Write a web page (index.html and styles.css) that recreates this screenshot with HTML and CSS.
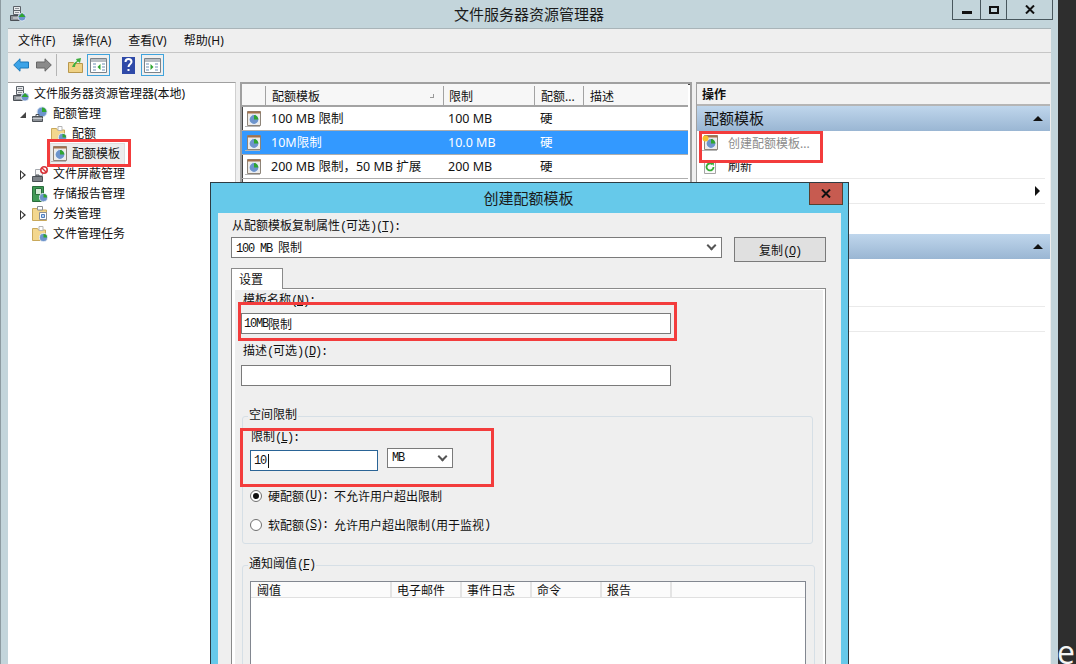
FILE: index.html
```html
<!DOCTYPE html>
<html lang="zh-CN">
<head>
    <meta charset="UTF-8">
    <title>文件服务器资源管理器</title>
    <link rel="stylesheet" href="styles.css">
</head>
<body>
    <svg class="icon-defs" width="0" height="0">
        <defs>
            <symbol id="pie" viewBox="0 0 10 10">
                <circle cx="5" cy="5" r="4.5" fill="#6d94cc" stroke="#e8eef6"/>
                <path d="M5 5V1a4 4 0 0 1 4 4z" fill="#2fa52f"/>
            </symbol>
            <symbol id="server" viewBox="0 0 16 16">
                <path d="M3.500 .5h7v4h-7zM3.500 4.500h7v4h-7z" fill="#e8eaec" stroke="#5b6168"/>
                <path d="M5 2.500h4M5 6.500h4" stroke="#8d9298"/>
                <path d="M.5 9.500h10v5H.5z" fill="#8d9298" stroke="#4b5056"/>
                <path d="M3 12h5" stroke="#e4e6e8"/>
                <circle cx="12" cy="11" r="4" fill="#6d94cc" stroke="#fff" stroke-width=".6"/>
                <path d="M8.500 11l3.500-4 3.500 4z" fill="#2fa52f"/>
            </symbol>
            <symbol id="quota-root" viewBox="0 0 16 16">
                <circle cx="10" cy="6" r="5" fill="#6d94cc" stroke="#dbe5f2"/>
                <path d="M10 6V1.500a4.500 4.500 0 0 1 4.500 4.500z" fill="#2fa52f"/>
                <path d="M.5 10.500h10v5H.5z" fill="#8d9298" stroke="#4b5056"/>
                <path d="M4 10.500V8.500h3v2" fill="none" stroke="#4b5056"/>
                <path d="M.5 12.500h10" stroke="#c8ccd0"/>
            </symbol>
            <symbol id="folder-pie" viewBox="0 0 16 16">
                <path d="M.5 2.500h5l1 1.500h7v10.500H.5z" fill="#f3d78e" stroke="#c9a95c"/>
                <path d="M7 .5h4v4H7z" fill="#fff" stroke="#b5b5b5"/>
                <use href="#pie" x="7" y="7" width="9" height="9"/>
            </symbol>
            <symbol id="template" viewBox="0 0 16 16">
                <path d="M2.500 .5h13v14h-13z" fill="#f0ece6" stroke="#8d8479"/>
                <path d="M2.500 .5h13v2h-13z" fill="#a3714c"/>
                <path d="M0 15.500h15" stroke="#b5b5b5"/>
                <use href="#pie" x="3.500" y="3" width="11" height="11"/>
            </symbol>
            <symbol id="screen" viewBox="0 0 16 16">
                <path d="M3.500 3.500h7v6h-7z" fill="#f8f8f8" stroke="#a5a9ae"/>
                <path d="M.5 10.500h10v5H.5z" fill="#7d8288" stroke="#4b5056"/>
                <path d="M4 10.500V9h3v1.500" fill="none" stroke="#4b5056"/>
                <circle cx="12" cy="4" r="3.200" fill="#fff" stroke="#d8343a" stroke-width="1.600"/>
                <path d="M10 2l4 4" stroke="#d8343a" stroke-width="1.400"/>
            </symbol>
            <symbol id="report" viewBox="0 0 16 16">
                <path d="M.5 .5h11v15H.5z" fill="#3f9a55" stroke="#2a6c3c"/>
                <path d="M3.500 2.500h6v6h-6z" fill="#d4ecd6" stroke="#2a6c3c"/>
                <use href="#pie" x="7" y="7" width="9" height="9"/>
            </symbol>
            <symbol id="folder-class" viewBox="0 0 16 16">
                <path d="M.5 2.500h5l1 1.500h8v10.500H.5z" fill="#f3d78e" stroke="#c9a95c"/>
                <path d="M5.500 .5h5v3.500h-5zM7.500 6.500h7v7h-7z" fill="#fff" stroke="#8a8f96"/>
                <path d="M9.500 8.500h3v3h-3z" fill="#bcd3ee" stroke="#4f7fc0"/>
            </symbol>
        </defs>
    </svg>

    <div class="window">
        <div class="titlebar">
            <svg class="app-icon" width="16" height="16"><use href="#server"/></svg>
            <div class="title">文件服务器资源管理器</div>
            <div class="win-buttons">
                <div class="win-btn btn-min"><span class="glyph-min"></span></div>
                <div class="win-btn btn-max"><span class="glyph-max"></span></div>
                <div class="win-btn btn-close">
                    <svg width="10" height="9" viewBox="0 0 10 9"><path d="M1 .5l8 8M9 .5l-8 8" stroke="#111" stroke-width="2"/></svg>
                </div>
            </div>
        </div>

        <div class="client">
            <div class="menubar">
                <span class="menu-item">文件(F)</span>
                <span class="menu-item">操作(A)</span>
                <span class="menu-item">查看(V)</span>
                <span class="menu-item">帮助(H)</span>
            </div>

            <div class="toolbar">
                <svg class="tool tool-back" width="16" height="14" viewBox="0 0 16 14"><path d="M.7 7L7 .8V4h8.500v6H7v3.200z" fill="#3ba3e8" stroke="#1d78b8"/></svg>
                <svg class="tool tool-forward" width="16" height="14" viewBox="0 0 16 14"><path d="M15.300 7L9 .8V4H.5v6H9v3.200z" fill="#8a8a8a" stroke="#666"/></svg>
                <span class="tool-sep"></span>
                <svg class="tool tool-up" width="15" height="16" viewBox="0 0 15 16">
                    <path d="M.5 5.500h5l1 1h8v9H.5z" fill="#efd184" stroke="#b8974c"/>
                    <path d="M4 10c1-3 3-5 5-6L8 2l5-1-1 5-2-1.500C9 5.500 7 7 7 10z" fill="#3fae3f"/>
                </svg>
                <span class="tool-box">
                    <svg width="17" height="15" viewBox="0 0 17 15">
                        <path d="M.5 .5h16v14H.5z" fill="#fff" stroke="#7b8289"/>
                        <path d="M1 1h15v3H1z" fill="#b8bec4"/>
                        <path d="M3 6h3M3 9h3M3 12h3M12 6h3M12 9h3M12 12h3" stroke="#6d8fb5"/>
                        <path d="M10.500 6v6l-3-3z" fill="#2fa52f"/>
                    </svg>
                </span>
                <svg class="tool tool-help" width="13" height="17" viewBox="0 0 13 17">
                    <path d="M0 0h13v17H0z" fill="#2f4aa8"/>
                    <path d="M3.500 5c0-4 6-4 6 0 0 2-3 2-3 5M6.500 12v2" fill="none" stroke="#fff" stroke-width="2"/>
                </svg>
                <span class="tool-box">
                    <svg width="17" height="15" viewBox="0 0 17 15">
                        <path d="M.5 .5h16v14H.5z" fill="#fff" stroke="#7b8289"/>
                        <path d="M1 1h15v3H1z" fill="#b8bec4"/>
                        <path d="M2 6h3M2 9h3M2 12h3M11 6h3M11 9h3M11 12h3" stroke="#6d8fb5"/>
                        <path d="M6.500 6v6l3-3z" fill="#2fa52f"/>
                    </svg>
                </span>
            </div>

            <div class="panes">
                <div class="tree">
                    <div class="node lv0"><svg class="node-icon"><use href="#server"/></svg>文件服务器资源管理器(本地)</div>
                    <div class="node lv1"><span class="twisty open"></span><svg class="node-icon"><use href="#quota-root"/></svg>配额管理</div>
                    <div class="node lv2"><svg class="node-icon"><use href="#folder-pie"/></svg>配额</div>
                    <div class="node lv2 selected"><span class="sel-box"><svg class="node-icon"><use href="#template"/></svg>配额模板</span></div>
                    <div class="node lv1"><span class="twisty"></span><svg class="node-icon"><use href="#screen"/></svg>文件屏蔽管理</div>
                    <div class="node lv1"><span class="twisty none"></span><svg class="node-icon"><use href="#report"/></svg>存储报告管理</div>
                    <div class="node lv1"><span class="twisty"></span><svg class="node-icon"><use href="#folder-class"/></svg>分类管理</div>
                    <div class="node lv1"><span class="twisty none"></span><svg class="node-icon"><use href="#folder-pie"/></svg>文件管理任务</div>
                </div>

                <div class="list">
                    <div class="list-head">
                        <span class="col col-icon"></span>
                        <span class="col col-name">配额模板<span class="sort-mark"></span></span>
                        <span class="col col-limit">限制</span>
                        <span class="col col-type">配额...</span>
                        <span class="col col-desc">描述</span>
                    </div>
                    <div class="list-row">
                        <span class="cell-icon"><svg width="16" height="16"><use href="#template"/></svg></span>
                        <span class="cell-name">100 MB 限制</span>
                        <span class="cell-limit">100 MB</span>
                        <span class="cell-type">硬</span>
                    </div>
                    <div class="list-row active">
                        <span class="cell-icon"><svg width="16" height="16"><use href="#template"/></svg></span>
                        <span class="cell-name">10M限制</span>
                        <span class="cell-limit">10.0 MB</span>
                        <span class="cell-type">硬</span>
                    </div>
                    <div class="list-row">
                        <span class="cell-icon"><svg width="16" height="16"><use href="#template"/></svg></span>
                        <span class="cell-name">200 MB 限制，50 MB 扩展</span>
                        <span class="cell-limit">200 MB</span>
                        <span class="cell-type">硬</span>
                    </div>
                    <div class="list-row">
                        <span class="cell-icon"><svg width="16" height="16"><use href="#template"/></svg></span>
                    </div>
                </div>

                <div class="actions">
                    <div class="actions-head">操作</div>
                    <div class="action-section">配额模板<span class="collapse"></span></div>
                    <div class="action-item muted">
                        <svg class="action-icon" width="16" height="16" viewBox="0 0 16 16">
                            <use href="#template"/>
                            <circle cx="3.500" cy="3.500" r="3" fill="#f6c22c"/>
                        </svg>创建配额模板...
                    </div>
                    <div class="action-item line">
                        <svg class="action-icon" width="16" height="16" viewBox="0 0 16 16">
                            <path d="M2.500 1.500h11v13h-11z" fill="#fafafa" stroke="#a5a5a5"/>
                            <path d="M11.500 8a3.500 3.500 0 1 1-1.200-2.700" fill="none" stroke="#35ad35" stroke-width="1.800"/>
                            <path d="M9 3.500l3 .5-.5 3z" fill="#35ad35"/>
                        </svg>刷新
                    </div>
                    <div class="action-item line tall"><span class="submenu"></span></div>
                    <div class="action-gap"></div>
                    <div class="action-section"><span class="collapse"></span></div>
                    <div class="action-item"></div>
                    <div class="action-item line"></div>
                    <div class="action-item line tall"></div>
                </div>
            </div>
        </div>
    </div>

    <div class="side-glyph">e</div>

    <div class="dialog">
        <div class="dialog-title">创建配额模板</div>
        <div class="dialog-close">
            <svg width="10" height="9" viewBox="0 0 10 9"><path d="M1 .5l8 8M9 .5l-8 8" stroke="#111" stroke-width="2"/></svg>
        </div>
        <div class="dialog-body">
            <div class="label copy-label">从配额模板复制属性<span class="lat">(</span>可选<span class="lat">)(<u>T</u>):</span></div>
            <div class="copy-row">
                <div class="field combo combo-wide"><span><span class="lat">100 MB </span>限制</span><span class="chevron"></span></div>
                <div class="push-btn">复制<span class="lat">(<u>O</u>)</span></div>
            </div>
            <div class="tab">设置</div>
            <div class="tab-panel">
                <div class="tab-inner">
                    <div class="label name-label">模板名称<span class="lat">(<u>N</u>):</span></div>
                    <div class="field text-field name-field"><span class="lat">10MB</span>限制</div>
                    <div class="label desc-label">描述<span class="lat">(</span>可选<span class="lat">)(<u>D</u>):</span></div>
                    <div class="field text-field desc-field"></div>

                    <fieldset class="group group-limit">
                        <legend>空间限制</legend>
                        <div class="label limit-label">限制<span class="lat">(<u>L</u>):</span></div>
                        <div class="limit-row">
                            <div class="field limit-field"><span class="lat">10</span><span class="caret"></span></div>
                            <div class="field combo combo-unit"><span class="lat">MB</span><span class="chevron"></span></div>
                        </div>
                        <div class="radio-row first"><span class="radio checked"></span>硬配额<span class="lat">(<u>U</u>): </span>不允许用户超出限制</div>
                        <div class="radio-row"><span class="radio"></span>软配额<span class="lat">(<u>S</u>): </span>允许用户超出限制<span class="lat">(</span>用于监视<span class="lat">)</span></div>
                    </fieldset>

                    <fieldset class="group group-notify">
                        <legend>通知阈值<span class="lat">(<u>F</u>)</span></legend>
                        <div class="threshold-list">
                            <div class="threshold-head">
                                <span class="th th-first">阈值</span>
                                <span class="th">电子邮件</span>
                                <span class="th">事件日志</span>
                                <span class="th">命令</span>
                                <span class="th">报告</span>
                            </div>
                        </div>
                    </fieldset>
                </div>
            </div>
        </div>
    </div>

    <div class="mark mark-tree"></div>
    <div class="mark mark-action"></div>
    <div class="mark mark-name"></div>
    <div class="mark mark-limit"></div>
</body>
</html>
```

FILE: styles.css
```css
* {
    box-sizing: border-box;
}

body {
    margin: 0;
    width: 1076px;
    height: 664px;
    overflow: hidden;
    position: relative;
    background: #2e2e2e;
    font-family: "Noto Sans", "Noto Sans CJK SC", sans-serif;
    font-size: 12px;
    line-height: 16px;
    color: #111;
}

.icon-defs {
    position: absolute;
}

.window {
    width: 1058px;
    height: 664px;
    background: #c3d5db;
    border-left: 1px solid #8d9ba1;
    display: flex;
    flex-direction: column;
}

.titlebar {
    height: 28px;
    flex: none;
    display: flex;
    position: relative;
}

.app-icon {
    margin: 6px 0 0 9px;
}

.title {
    position: absolute;
    left: 453px;
    top: 4px;
    font-size: 15px;
    line-height: 20px;
    color: #1a1a1a;
}

.win-buttons {
    margin-left: auto;
    margin-right: 5px;
    display: flex;
    height: 20px;
    border: 1px solid #48575d;
    border-top: none;
}

.win-btn {
    display: flex;
    align-items: center;
    justify-content: center;
}

.btn-min { width: 28px; border-right: 1px solid #48575d; }
.btn-max { width: 26px; border-right: 1px solid #48575d; }
.btn-close { width: 45px; }

.glyph-min {
    width: 10px;
    height: 3px;
    background: #111;
    margin-top: 5px;
}

.glyph-max {
    width: 10px;
    height: 8px;
    border: 2px solid #111;
}

.client {
    flex: 1;
    min-height: 0;
    margin: 0 7px 0 7px;
    background: #efefef;
    display: flex;
    flex-direction: column;
    border-top: 1px solid #a9b4b8;
}

.menubar {
    height: 24px;
    flex: none;
    display: flex;
    align-items: center;
    gap: 17px;
    padding-left: 10px;
    border-bottom: 1px solid #c6c6c6;
}

.toolbar {
    height: 29px;
    flex: none;
    display: flex;
    align-items: center;
    padding: 0 0 5px 5px;
}

.tool {
    flex: none;
}

.tool-back { margin-right: 7px; }
.tool-forward { margin-right: 4px; }

.tool-sep {
    width: 1px;
    height: 22px;
    background: #b5b5b5;
    margin-right: 11px;
}

.tool-up {
    margin-right: 4px;
}

.tool-box {
    width: 23px;
    height: 22px;
    border: 1px solid #3fa3dc;
    display: flex;
    align-items: center;
    justify-content: center;
    margin-right: 12px;
}

.tool-help {
    margin-right: 6px;
}

.panes {
    flex: 1;
    min-height: 0;
    display: flex;
    gap: 4px;
}

.tree {
    width: 228px;
    background: #fff;
    border-top: 1px solid #a0a0a0;
    border-right: 1px solid #d0d0d0;
    padding-top: 1px;
}

.node {
    height: 20px;
    display: flex;
    align-items: center;
    white-space: nowrap;
}

.lv0 { padding-left: 5px; }
.lv1 { padding-left: 12px; }
.lv2 { padding-left: 43px; }

.node-icon {
    width: 16px;
    height: 16px;
    flex: none;
    margin-right: 5px;
}

.twisty {
    width: 12px;
    flex: none;
    height: 9px;
    position: relative;
}

.twisty::before {
    content: "";
    position: absolute;
    left: 0;
    top: 0;
    border-left: 6px solid #333;
    border-top: 5px solid transparent;
    border-bottom: 5px solid transparent;
}

.twisty:not(.open)::after {
    content: "";
    position: absolute;
    left: 1px;
    top: 2px;
    border-left: 3px solid #fff;
    border-top: 3px solid transparent;
    border-bottom: 3px solid transparent;
}

.twisty.open::before {
    border-left: 6px solid transparent;
    border-top: none;
    border-bottom: 6px solid #444;
    top: 2px;
}

.twisty.none::before {
    display: none;
}

.twisty.none::after {
    display: none;
}

.sel-box {
    display: flex;
    align-items: center;
    height: 20px;
    padding-right: 4px;
    background: #ececec;
    box-shadow: 0 0 0 1px #dedede;
}

.list {
    width: 452px;
    background: #fff;
    border: 2px solid #a0a0a0;
    border-bottom: none;
    padding: 0 2px 0 0;
    box-shadow: inset 1px 1px 0 #444;
}

.list-head {
    height: 23px;
    display: flex;
    background: #f7f7f7;
    border-bottom: 2px solid #a3a3a3;
    padding-top: 2px;
}

.col {
    border-left: 1px solid #a3a3a3;
    padding-left: 6px;
    line-height: 21px;
    position: relative;
    height: 19px;
}

.col-icon { width: 23px; border-left: none; }
.col-name { width: 178px; }
.col-limit { width: 91px; padding-left: 5px; }
.col-type { width: 49px; }
.col-desc { flex: 1; }

.sort-mark {
    position: absolute;
    right: 9px;
    top: 8px;
    width: 4px;
    height: 4px;
    border-right: 1px solid #999;
    border-bottom: 1px solid #999;
}

.list-row {
    height: 24px;
    display: flex;
    align-items: center;
    border-bottom: 1px solid #aeaeae;
    font-size: 12.5px;
}

.list-row.active {
    background: #3399ff;
    color: #fff;
}

.cell-icon {
    width: 29px;
    padding-left: 3px;
    display: flex;
    flex: none;
}

.cell-name { width: 177px; white-space: nowrap; }
.cell-limit { width: 92px; }

.actions {
    width: 354px;
    background: #fff;
    border-top: 2px solid #a0a0a0;
    border-left: 1px solid #a0a0a0;
}

.actions-head {
    height: 22px;
    background: #f2f2f2;
    border-bottom: 2px solid #b5b5b5;
    padding-left: 5px;
    line-height: 21px;
    font-weight: 700;
}

.action-section {
    height: 25px;
    background: linear-gradient(#bfd6ec, #9ab6d3);
    padding-left: 7px;
    font-size: 15px;
    line-height: 25px;
    position: relative;
}

.collapse {
    position: absolute;
    right: 7px;
    top: 10px;
    border-left: 5px solid transparent;
    border-right: 5px solid transparent;
    border-bottom: 5px solid #111;
}

.action-item {
    height: 24px;
    margin: 0 5px;
    padding-left: 26px;
    display: flex;
    align-items: center;
    position: relative;
}

.action-item.line {
    border-bottom: 1px solid #eaeaea;
}

.action-item.tall {
    height: 25px;
}

.action-item.muted {
    color: #8c8c8c;
    padding-top: 1px;
}

.action-icon {
    position: absolute;
    left: 0;
    top: 4px;
}

.action-gap {
    height: 30px;
}

.submenu {
    position: absolute;
    right: 5px;
    top: 7px;
    border-left: 5px solid #111;
    border-top: 5px solid transparent;
    border-bottom: 5px solid transparent;
}

.side-glyph {
    position: absolute;
    left: 1057px;
    top: 636px;
    font-family: "Open Sans", sans-serif;
    font-size: 32px;
    line-height: 32px;
    color: #f5f5f5;
}

.dialog {
    position: absolute;
    left: 210px;
    top: 182px;
    width: 639px;
    height: 490px;
    background: #66c9ea;
    border: 1px solid #2d3b42;
    padding: 0 7px;
}

.dialog-title {
    height: 30px;
    font-size: 15px;
    line-height: 30px;
    text-align: center;
    color: #1a1a1a;
    padding-right: 2px;
}

.dialog-close {
    position: absolute;
    right: 5px;
    top: 0;
    width: 34px;
    height: 22px;
    background: #c75b50;
    border: 1px solid #57402f;
    border-top: none;
    display: flex;
    align-items: center;
    justify-content: center;
}

.dialog-body {
    height: 460px;
    background: #efefef;
    padding: 4px 15px 0 13px;
    font-family: "Noto Sans CJK SC", sans-serif;
}

.lat {
    font-family: "Liberation Mono", monospace;
    font-size: 12px;
    letter-spacing: -1.2px;
}

.label {
    height: 16px;
    white-space: nowrap;
}

.copy-label {
    padding-left: 1px;
}

.copy-row {
    display: flex;
    align-items: flex-start;
    margin-top: 4px;
}

.field {
    background: #fff;
    border: 1px solid #7a7a7a;
    height: 21px;
    display: flex;
    align-items: center;
    white-space: nowrap;
}

.combo {
    justify-content: space-between;
    padding: 0 3px 0 4px;
}

.combo-wide {
    width: 491px;
}

.combo-unit {
    width: 66px;
    height: 20px;
}

.chevron {
    width: 7px;
    height: 7px;
    margin: -4px 3px 0 0;
    border-right: 2px solid #555;
    border-bottom: 2px solid #555;
    transform: rotate(45deg);
}

.push-btn {
    width: 92px;
    height: 25px;
    margin-left: 12px;
    background: #e0e0e0;
    border: 1px solid #7a7a7a;
    text-align: center;
    line-height: 23px;
}

.tab {
    width: 52px;
    height: 21px;
    margin-top: 6px;
    background: #fff;
    border: 1px solid #8a8a8a;
    border-bottom: none;
    padding-left: 7px;
    line-height: 20px;
    position: relative;
    z-index: 1;
}

.tab-panel {
    margin-top: -1px;
    height: 400px;
    background: #fff;
    border: 1px solid #8a8a8a;
    padding: 1px 2px 0 3px;
}

.tab-inner {
    height: 100%;
    background: #efefef;
    padding: 1px 0 0 6px;
}

.name-label {
    padding-left: 2px;
}

.text-field {
    width: 430px;
    padding-left: 2px;
}

.name-field {
    margin-top: 6px;
}

.desc-label {
    margin-top: 8px;
    padding-left: 2px;
}

.desc-field {
    margin-top: 7px;
}

.group {
    margin: 0 0 0 1px;
    padding: 0;
    min-width: 0;
    border: 1px solid #d6dfe6;
    border-radius: 3px;
}

.group legend {
    margin-left: -2px;
    padding: 0 1px;
    height: 16px;
    line-height: 12px;
}

.group-limit {
    margin-top: 22px;
    width: 571px;
    height: 136px;
    padding: 4px 0 0 7px;
}

.limit-label {
    padding-left: 1px;
}

.limit-row {
    display: flex;
    align-items: flex-start;
    gap: 9px;
    margin-top: 4px;
}

.limit-field {
    width: 128px;
    margin-top: 2px;
    border-color: #2a6496;
    padding-left: 3px;
}

.caret {
    width: 1px;
    height: 14px;
    background: #111;
    margin-left: 2px;
}

.radio-row {
    display: flex;
    align-items: center;
    height: 16px;
    margin-top: 13px;
    white-space: pre;
}

.radio-row.first {
    margin-top: 17px;
}

.radio {
    width: 12px;
    height: 12px;
    border: 1px solid #707070;
    border-radius: 50%;
    background: #fff;
    margin-right: 6px;
    display: flex;
    align-items: center;
    justify-content: center;
}

.radio.checked::before {
    content: "";
    width: 6px;
    height: 6px;
    border-radius: 50%;
    background: #111;
}

.group-notify {
    margin-top: 13px;
    width: 573px;
    height: 130px;
    padding: 8px 0 0 7px;
}

.threshold-list {
    width: 556px;
    height: 110px;
    background: #fff;
    border: 1px solid #828790;
}

.threshold-head {
    height: 16px;
    display: flex;
    background: #fbfbfb;
    border-bottom: 1px solid #e0e0e0;
}

.th {
    width: 70px;
    padding-left: 5px;
    border-right: 2px solid #e4e4e4;
    line-height: 16px;
}

.th-first {
    width: 141px;
    padding-left: 6px;
}

.mark {
    position: absolute;
    border: 3px solid #f33c3c;
}

.mark-tree { left: 47px; top: 139px; width: 84px; height: 28px; }
.mark-action { left: 699px; top: 131px; width: 124px; height: 32px; }
.mark-name { left: 238px; top: 302px; width: 439px; height: 39px; }
.mark-limit { left: 240px; top: 428px; width: 254px; height: 59px; }
```
